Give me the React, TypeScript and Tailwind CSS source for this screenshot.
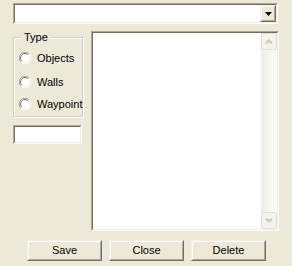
import React from "react";

const font = { fontFamily: '"Liberation Sans", Arial, sans-serif' };

function Sunken({ className = "", children }: { className?: string; children?: React.ReactNode }) {
  return (
    <div className={`border border-t-[#ACA899] border-l-[#ACA899] border-r-white border-b-white ${className}`}>
      <div className="w-full h-full border border-t-[#716F64] border-l-[#716F64] border-r-[#F1EFE2] border-b-[#F1EFE2] bg-white flex">
        {children}
      </div>
    </div>
  );
}

function Raised({ className = "", children }: { className?: string; children?: React.ReactNode }) {
  return (
    <div className={`border border-t-[#F1EFE2] border-l-[#F1EFE2] border-r-[#716F64] border-b-[#716F64] ${className}`}>
      <div className="w-full h-full border border-t-white border-l-white border-r-[#ACA899] border-b-[#ACA899] bg-[#ECE9D8] flex items-center justify-center">
        {children}
      </div>
    </div>
  );
}

function Radio({ label }: { label: string }) {
  return (
    <div className="flex items-center h-[20px]">
      <svg width="12" height="12" viewBox="0 0 12 12" className="ml-[5px] shrink-0">
        <circle cx="6" cy="6" r="5.5" fill="white" />
        <path d="M 1.9 10.1 A 5.5 5.5 0 0 1 10.1 1.9" stroke="#ACA899" strokeWidth="1" fill="none" />
        <path d="M 10.1 1.9 A 5.5 5.5 0 0 1 1.9 10.1" stroke="#FFFFFF" strokeWidth="1" fill="none" />
        <path d="M 2.8 9.2 A 4.5 4.5 0 0 1 9.2 2.8" stroke="#716F64" strokeWidth="1" fill="none" />
        <path d="M 9.2 2.8 A 4.5 4.5 0 0 1 2.8 9.2" stroke="#F1EFE2" strokeWidth="1" fill="none" />
      </svg>
      <span className="ml-[6px] text-[11px] leading-[13px] text-black whitespace-nowrap">{label}</span>
    </div>
  );
}

export default function App() {
  return (
    <div className="w-[292px] h-[266px] bg-[#ECE9D8] overflow-hidden flex flex-col" style={font}>
      {/* Combobox */}
      <Sunken className="ml-[13px] mt-[3px] w-[265px] h-[21px]">
        <div className="flex-1" />
        <Raised className="w-[16px] h-[17px]">
          <svg width="7" height="4" viewBox="0 0 7 4">
            <path d="M0 0 H7 L3.5 4 Z" fill="black" />
          </svg>
        </Raised>
      </Sunken>

      <div className="flex mt-[7px] ml-[13px]">
        {/* Left column */}
        <div className="w-[70px] flex flex-col">
          <div className="relative mt-[6px] h-[80px] w-[70px] border border-[#D0D0BF] shadow-[inset_1px_1px_0_white,1px_1px_0_white]">
            <span className="absolute -top-[7px] left-[8px] px-[2px] bg-[#ECE9D8] text-[11px] leading-[13px] text-black">
              Type
            </span>
            <div className="flex flex-col pt-[10px]">
              <Radio label="Objects" />
              <div className="mt-[4px]">
                <Radio label="Walls" />
              </div>
              <div className="mt-[2px]">
                <Radio label="Waypoint" />
              </div>
            </div>
          </div>
          <Sunken className="mt-[8px] w-[69px] h-[19px]" />
        </div>

        {/* Listbox */}
        <Sunken className="ml-[8px] w-[188px] h-[200px]">
          <div className="flex-1" />
          <div className="w-[16px] h-full flex flex-col justify-between bg-gradient-to-r from-[#EEEDE5] to-[#FDFDFB]">
            <div className="w-[16px] h-[17px] rounded-[2px] border border-[#E1DFD5] bg-[#F3F2EC] flex items-center justify-center">
              <svg width="8" height="5" viewBox="0 0 8 5">
                <path d="M1 4.5 L4 1.5 L7 4.5" stroke="#C9C7BA" strokeWidth="2" fill="none" />
              </svg>
            </div>
            <div className="w-[16px] h-[17px] rounded-[2px] border border-[#E1DFD5] bg-[#F3F2EC] flex items-center justify-center">
              <svg width="8" height="5" viewBox="0 0 8 5">
                <path d="M1 0.5 L4 3.5 L7 0.5" stroke="#C9C7BA" strokeWidth="2" fill="none" />
              </svg>
            </div>
          </div>
        </Sunken>
      </div>

      {/* Buttons */}
      <div className="flex mt-[9px] ml-[27px] gap-[7px]">
        {["Save", "Close", "Delete"].map((t) => (
          <Raised key={t} className="w-[75px] h-[21px]">
            <span className="text-[11px] leading-[13px] text-black">{t}</span>
          </Raised>
        ))}
      </div>
    </div>
  );
}
